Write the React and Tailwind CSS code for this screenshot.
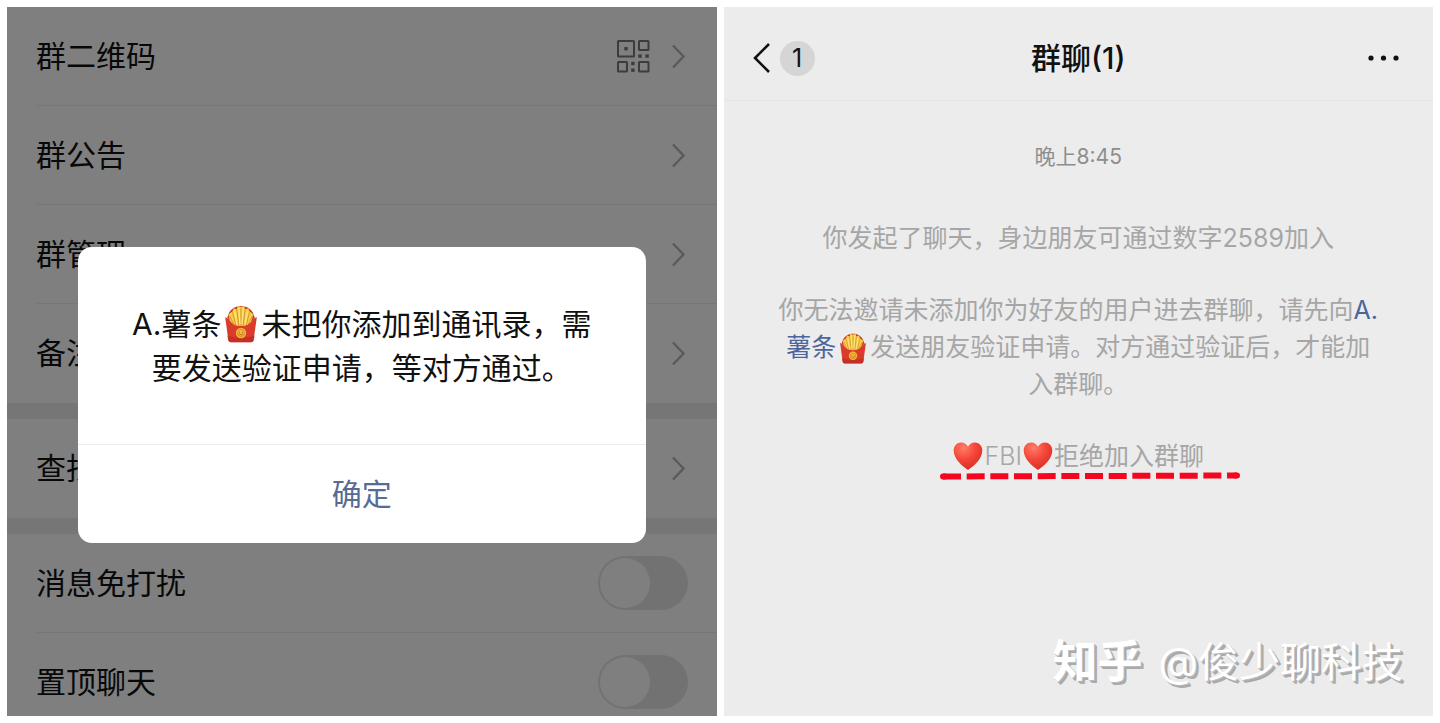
import React from "react";

const groups = [
  [
    { id: "qr", label: "群二维码", type: "link", qr: true },
    { id: "notice", label: "群公告", type: "link" },
    { id: "manage", label: "群管理", type: "link" },
    { id: "remark", label: "备注", type: "link" },
  ],
  [{ id: "search", label: "查找聊天记录", type: "link" }],
  [
    { id: "mute", label: "消息免打扰", type: "switch" },
    { id: "pin", label: "置顶聊天", type: "switch" },
  ],
];

function QrIcon() {
  return (
    <svg className="w-[33px] h-[33px] text-[#787878]" viewBox="0 0 33 33" fill="none" aria-hidden="true">
      <g stroke="currentColor" strokeWidth="2">
        <rect x="1" y="1" width="16" height="15.5" rx="0.5" />
        <rect x="22" y="1" width="9.5" height="9" rx="0.5" />
        <rect x="1" y="22" width="9" height="9.5" rx="0.5" />
        <rect x="22" y="22" width="9.5" height="9.5" rx="0.5" />
      </g>
      <g fill="currentColor">
        <rect x="7.3" y="7" width="3.4" height="3.4" />
        <rect x="21.3" y="14.4" width="3.4" height="3.4" />
        <rect x="28.4" y="14.4" width="3.4" height="3.4" />
        <rect x="14.2" y="21.8" width="3.4" height="3.4" />
        <rect x="14.2" y="28.5" width="3.4" height="3.4" />
      </g>
    </svg>
  );
}

function Chevron() {
  return (
    <svg className="w-[18px] h-[26px]" viewBox="0 0 18 26" fill="none" aria-hidden="true">
      <path d="M3 2.5 13.5 13.5 3 24.5" stroke="#b4b4b4" strokeWidth="2.4" />
    </svg>
  );
}

function Fries({ className }) {
  return (
    <svg className={className} viewBox="0 0 32 36" role="img" aria-label="薯条">
      <path d="M3 12C5 4 10 1 16 1s11 3 13 11l-6 7H9z" fill="#c8371f" />
      <path
        d="M4 9l4-3 1-3 3 1 1-3 3 1 3-1 1 3 3-1 1 3 4 3-3 8-5 4H11l-5-4z"
        fill="#f8cf4c"
      />
      <path
        d="M8 7l3 12M12 4l2 16M16 3v17M20 4l-2 16M24 7l-3 12M5 10l4 8M27 10l-4 8"
        stroke="#d9912a"
        strokeWidth="0.9"
        fill="none"
      />
      <path d="M10 6l2 12M14 3l1 15M18 3l-1 15M22 6l-2 12" stroke="#ffe98a" strokeWidth="1" fill="none" />
      <path
        d="M1 11.5c2.500.6 4 2.500 5.500 4.500 2.500 3 5.500 4 9.500 4s7-1 9.500-4c1.500-2 3-3.900 5.500-4.500L28 33c-.2 1.500-1 2.300-2.500 2.300h-19C5 35.300 4.200 34.500 4 33z"
        fill="#d93b2c"
      />
      <path d="M3 29l.8 4.200c.2 1.400 1.200 2.100 2.700 2.100h19c1.500 0 2.500-.7 2.700-2.100L29 29c-7 3-19 3-26 0z" fill="#b92a20" opacity="0.6" />
      <circle cx="16" cy="26.500" r="4.900" fill="#f5b93a" />
      <circle cx="16" cy="26.500" r="3.300" fill="none" stroke="#d98522" strokeWidth="0.8" />
      <path d="M14.600 25.500v1M17.400 25.500v1M14 27.500q2 1.600 4 0" stroke="#b8651a" strokeWidth="0.8" fill="none" />
    </svg>
  );
}

function Heart({ id }) {
  return (
    <svg className="inline-block w-[30px] h-[30px] mx-px align-[-6px]" viewBox="0 0 30 30" role="img" aria-label="红心">
      <defs>
        <radialGradient id={id} cx="0.35" cy="0.2" r="0.9">
          <stop offset="0" stopColor="#ff7d68" />
          <stop offset="0.45" stopColor="#f5483a" />
          <stop offset="1" stopColor="#d3261f" />
        </radialGradient>
      </defs>
      <path
        d="M15 29C10 25.500.7 18.500.7 9.500.7 4.800 4 1.500 8.200 1.500c3 0 5.500 1.700 6.800 4.300 1.300-2.600 3.800-4.300 6.800-4.300 4.200 0 7.500 3.300 7.500 8C29.300 18.500 20 25.500 15 29z"
        fill={`url(#${id})`}
      />
    </svg>
  );
}

function SettingRow({ item, last }) {
  const border = last ? "border-transparent" : "border-[#efefef]";
  return (
    <li className={`ml-[29px] border-b ${border}`}>
      {item.type === "link" ? (
        <button className="w-full flex items-center py-[27px] pr-[29px] text-left">
          <span className="flex-1 text-[30px] leading-[44px]">{item.label}</span>
          <span className="flex items-center gap-5">
            {item.qr && <QrIcon />}
            <Chevron />
          </span>
        </button>
      ) : (
        <label className="flex items-center justify-between py-[27px] pr-[29px]">
          <span className="text-[30px] leading-[44px]">{item.label}</span>
          <input
            type="checkbox"
            role="switch"
            className="appearance-none shrink-0 w-[90px] h-[54px] -my-[5px] rounded-full bg-[#e4e4e4] before:block before:w-[50px] before:h-[50px] before:m-[2px] before:rounded-full before:bg-white"
          />
        </label>
      )}
    </li>
  );
}

function SettingsPanel() {
  return (
    <section className="relative flex-1 min-w-0 overflow-hidden bg-[#ededed] text-[#111]">
      <div className="flex flex-col gap-4">
        {groups.map((items, i) => (
          <ul key={i} className="bg-white">
            {items.map((item, j) => (
              <SettingRow key={item.id} item={item} last={j === items.length - 1} />
            ))}
          </ul>
        ))}
      </div>

      <div className="absolute inset-0 flex items-center justify-center pt-[66px] bg-black/50">
        <div role="dialog" aria-modal="true" className="w-4/5 rounded-[14px] bg-white overflow-hidden">
          <p className="pt-[55px] pb-[54px] text-center text-[30px] leading-[44px]">
            A.薯条
            <Fries className="inline-block w-[34px] h-[38px] mx-[3px] -my-2 align-baseline" />
            未把你添加到通讯录，需
            <br />
            要发送验证申请，等对方通过。
          </p>
          <button className="w-full border-t border-[#ebebeb] py-[27px] text-[30px] leading-[44px] text-[#576b95]">
            确定
          </button>
        </div>
      </div>
    </section>
  );
}

function ChatPanel() {
  return (
    <section className="flex-1 min-w-0 flex flex-col bg-[#ececec]">
      <header className="grid grid-cols-[1fr_auto_1fr] items-center px-[29px] pt-[29px] pb-[20px] border-b border-[#e6e6e6] text-[#111]">
        <button className="flex items-center gap-[10px] justify-self-start" aria-label="返回">
          <svg className="w-[17px] h-[32px]" viewBox="0 0 17 32" fill="none" aria-hidden="true">
            <path d="M16 2 2 16l14 14" stroke="currentColor" strokeWidth="2.6" />
          </svg>
          <span className="w-[35px] h-[35px] rounded-full bg-[#d5d5d5] text-[25px] leading-[35px] text-center">1</span>
        </button>
        <h1 className="text-[30px] leading-[44px] font-medium">群聊(1)</h1>
        <button className="justify-self-end mr-1" aria-label="更多">
          <svg className="w-[34px] h-[8px]" viewBox="0 0 34 8" fill="currentColor" aria-hidden="true">
            <circle cx="5" cy="4" r="2.6" />
            <circle cx="17.500" cy="4" r="2.6" />
            <circle cx="30" cy="4" r="2.6" />
          </svg>
        </button>
      </header>

      <div className="flex-1 flex flex-col pt-[37px] text-center text-[25px] leading-[37px] text-[#a6a6a6]">
        <time className="text-[21px] text-[#8e8e8e]">晚上8:45</time>
        <p className="mt-[45px]">你发起了聊天，身边朋友可通过数字2589加入</p>
        <p className="mt-[35px]">
          你无法邀请未添加你为好友的用户进去群聊，请先向
          <a href="#contact" className="text-[#4c659c]">
            A.
            <br />
            薯条
            <Fries className="inline-block w-[28px] h-[31px] mx-[3px] -my-2 align-baseline" />
          </a>
          发送朋友验证申请。对方通过验证后，才能加
          <br />
          入群聊。
        </p>
        <p className="mt-[35px]">
          <Heart id="heart-left" />
          <span className="font-light">FBI</span>
          <Heart id="heart-right" />
          拒绝加入群聊
        </p>
        <svg className="self-center ml-[24px] -mt-[3px] w-[300px] h-[8px]" viewBox="0 0 300 8" fill="none" aria-hidden="true">
          <path d="M3 4.500h2M295 3.500h2" stroke="#f5061f" strokeWidth="6" strokeLinecap="round" />
          <path d="M3 4.500 297 3.500" stroke="#f5061f" strokeWidth="6" strokeDasharray="18 5.670" />
        </svg>

        <div className="mt-auto flex items-center justify-end gap-4 pr-[30px] pb-[24px] leading-[60px] text-white [text-shadow:1px_1px_0_#bbb,2px_2px_0_#aaa,3px_3px_0_#aaa]">
          <span className="text-[45px] font-bold">知乎</span>
          <span className="text-[41px]">@俊少聊科技</span>
        </div>
      </div>
    </section>
  );
}

export default function App() {
  return (
    <main className="h-screen flex gap-[7px] p-[7px] bg-white font-['Inter','Noto_Sans_CJK_SC',sans-serif]">
      <SettingsPanel />
      <ChatPanel />
    </main>
  );
}
